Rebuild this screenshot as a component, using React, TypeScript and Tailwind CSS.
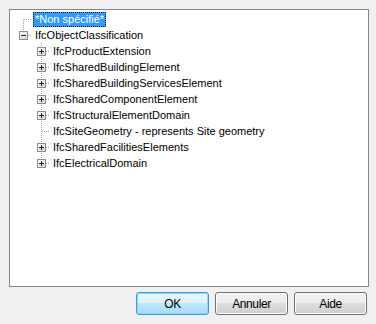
import { Fragment } from 'react';

type BoxKind = 'plus' | 'minus' | null;

interface TreeRow {
  label: string;
  level: number;
  guides: boolean[];
  first?: boolean;
  last?: boolean;
  box: BoxKind;
  selected?: boolean;
}

const CELL = 18;
const ROW_H = 16;
const LINE = '#a0a0a0';

const childNames: { label: string; box: BoxKind }[] = [
  { label: 'IfcProductExtension', box: 'plus' },
  { label: 'IfcSharedBuildingElement', box: 'plus' },
  { label: 'IfcSharedBuildingServicesElement', box: 'plus' },
  { label: 'IfcSharedComponentElement', box: 'plus' },
  { label: 'IfcStructuralElementDomain', box: 'plus' },
  { label: 'IfcSiteGeometry - represents Site geometry', box: null },
  { label: 'IfcSharedFacilitiesElements', box: 'plus' },
  { label: 'IfcElectricalDomain', box: 'plus' },
];

const rows: TreeRow[] = [
  { label: '*Non spécifié*', level: 0, guides: [], first: true, box: null, selected: true },
  { label: 'IfcObjectClassification', level: 0, guides: [], last: true, box: 'minus' },
  ...childNames.map((c, i) => ({
    label: c.label,
    level: 1,
    guides: [false],
    last: i === childNames.length - 1,
    box: c.box,
  })),
];

// connector glyphs for one tree row (dotted lines + expand box)
function Connector({ row }: { row: TreeRow }) {
  const width = (row.guides.length + 1) * CELL;
  const off = row.guides.length * CELL;
  const cx = off + 9.5;
  return (
    <svg width={width} height={ROW_H} className="shrink-0" shapeRendering="crispEdges">
      <defs>
        <linearGradient id="boxfill" x1="0" y1="0" x2="1" y2="1">
          <stop offset="0" stopColor="#ffffff" />
          <stop offset="1" stopColor="#cfcfcf" />
        </linearGradient>
      </defs>
      {row.guides.map((g, i) =>
        g ? (
          <line key={i} x1={i * CELL + 9.5} y1={0} x2={i * CELL + 9.5} y2={ROW_H} stroke={LINE} strokeDasharray="1 1" />
        ) : null,
      )}
      <line
        x1={cx}
        y1={row.first ? 8 : 0}
        x2={cx}
        y2={row.last ? 9 : ROW_H}
        stroke={LINE}
        strokeDasharray="1 1"
      />
      <line x1={off + 10} y1={8.5} x2={off + CELL} y2={8.5} stroke={LINE} strokeDasharray="1 1" />
      {row.box && (
        <Fragment>
          <rect x={off + 5.5} y={4.5} width={8} height={8} fill="url(#boxfill)" stroke="#8e8f8f" />
          <line x1={off + 7} y1={8.5} x2={off + 12} y2={8.5} stroke="#222222" />
          {row.box === 'plus' && <line x1={cx} y1={6} x2={cx} y2={11} stroke="#222222" />}
        </Fragment>
      )}
    </svg>
  );
}

function DialogButton({ label, primary }: { label: string; primary?: boolean }) {
  return (
    <button
      className={`w-[73px] h-[23px] rounded-[3px] border text-[12px] tracking-[-0.4px] text-black ${
        primary
          ? 'border-[#3c9ad8] bg-[linear-gradient(#e9f6fd_0%,#dbf1fc_50%,#bee6fd_50%,#a9daf5_100%)] shadow-[inset_0_0_0_1px_#8fd8f8]'
          : 'border-[#707070] bg-[linear-gradient(#f2f2f2_0%,#ebebeb_50%,#dddddd_50%,#cfcfcf_100%)] shadow-[inset_0_0_0_1px_#fcfcfc]'
      }`}
      style={{ fontFamily: '"Liberation Sans", Arial, sans-serif' }}
    >
      {label}
    </button>
  );
}

export default function App() {
  return (
    <div
      className="w-[376px] h-[324px] bg-[#f0f0f0] flex flex-col"
      style={{ fontFamily: '"Liberation Sans", Arial, sans-serif' }}
    >
      {/* Tree view */}
      <div className="mt-[9px] ml-[9px] w-[360px] h-[278px] border border-[#828790] bg-white pl-[4px] pt-[1px] overflow-hidden">
        {rows.map((row) => (
          <div key={row.label} className="flex items-start h-[16px]">
            <Connector row={row} />
            <span
              className={`ml-[1px] mt-[1px] h-[15px] px-[2px] leading-[14px] text-[11px] whitespace-nowrap ${
                row.selected
                  ? 'bg-[#3399ff] text-white outline outline-1 outline-dotted outline-offset-[-1px] outline-[#1a1a1a]'
                  : 'text-black'
              }`}
            >
              {row.label}
            </span>
          </div>
        ))}
      </div>

      {/* Buttons */}
      <div className="mt-[5px] flex justify-end gap-[6px] pr-[9px]">
        <DialogButton label="OK" primary />
        <DialogButton label="Annuler" />
        <DialogButton label="Aide" />
      </div>
    </div>
  );
}
